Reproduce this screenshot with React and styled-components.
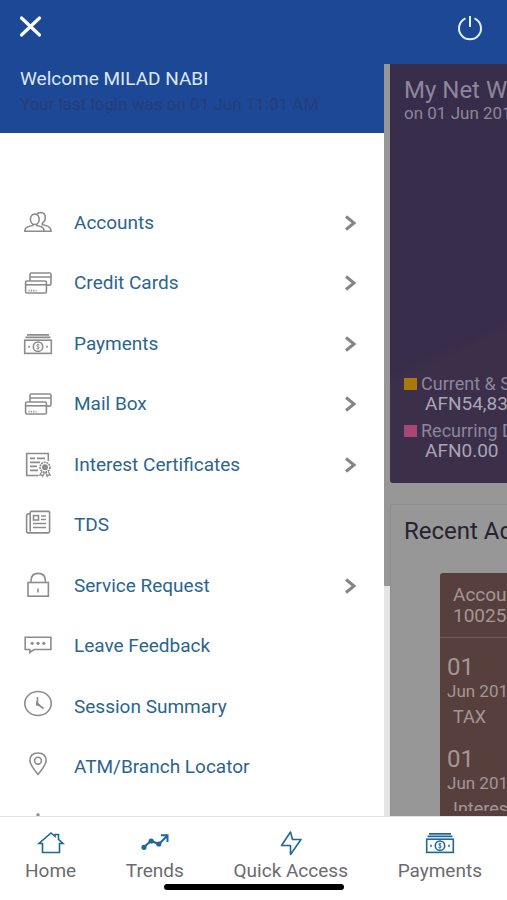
import React from 'react'
import styled, { createGlobalStyle } from 'styled-components'

const GlobalStyle = createGlobalStyle`
  * {
    box-sizing: border-box;
  }
  body {
    margin: 0;
    font-family: Roboto, 'Liberation Sans', sans-serif;
    background: #fff;
  }
  h2, p, ul {
    margin: 0;
    padding: 0;
  }
  ul {
    list-style: none;
  }
`

const Screen = styled.div`
  display: flex;
  flex-direction: column;
  height: 100vh;
  overflow: hidden;
`
const TopBar = styled.header`
  display: flex;
  flex: none;
  align-items: center;
  justify-content: space-between;
  height: 64px;
  padding: 0 22px 10px 16px;
  background: #1d4896;
`
const IconButton = styled.button`
  display: flex;
  padding: 0;
  border: none;
  background: none;
  color: ${p => p.$color};
  cursor: pointer;
`
const Main = styled.div`
  display: flex;
  flex: 1;
  min-height: 0;
`

const Drawer = styled.aside`
  display: flex;
  flex: none;
  width: 390px;
  max-width: 77%;
  overflow: hidden;
`
const DrawerBody = styled.div`
  flex: 1;
  min-width: 0;
  background: #fff;
`
const ScrollTrack = styled.div`
  flex: none;
  width: 6px;
  background: #e4e4e4;
`
const ScrollThumb = styled.div`
  height: 522px;
  background: #979797;
`
const Greeting = styled.div`
  height: 69px;
  padding: 3px 20px 0;
  background: #1d4896;
`
const Welcome = styled.h2`
  color: #dbe8fb;
  font-size: 19px;
  font-weight: 400;
  line-height: 24px;
`
const LastLogin = styled.p`
  color: #263d79;
  font-size: 17px;
  line-height: 26px;
  white-space: nowrap;
`
const Menu = styled.ul`
  padding-top: 59px;
`
const MenuItem = styled.li`
  height: 61px;
  &:nth-child(even) {
    height: 60px;
  }
`
const MenuLink = styled.a`
  display: flex;
  align-items: center;
  height: 100%;
  padding: 0 24px 0 22px;
  color: #2b658f;
  font-size: 19px;
  line-height: 24px;
  text-decoration: none;
`
const MenuLabel = styled.span`
  flex: 1;
  padding-left: 20px;
`
const GreyIcon = styled.svg`
  flex: none;
  width: 32px;
  height: 32px;
  fill: none;
  stroke: #8c8c8c;
  stroke-width: 1.6;
  overflow: visible;
`
const Chevron = styled.svg`
  flex: none;
  width: 20px;
  height: 20px;
  fill: none;
  stroke: #858585;
  stroke-width: 3;
`

const Dashboard = styled.main`
  flex: 1;
  min-width: 0;
  overflow: hidden;
  background: #979797;
  white-space: nowrap;
`
const NetWorth = styled.section`
  display: flex;
  flex-direction: column;
  justify-content: space-between;
  height: 419px;
  padding: 13px 14px 22px;
  border-radius: 0 0 0 3px;
  background: linear-gradient(155deg, #372c49 64%, #3b2f4a 68%);
  color: #8d869c;
`
const NetTitle = styled.h2`
  font-size: 24px;
  font-weight: 400;
  line-height: 26px;
`
const NetDate = styled.p`
  font-size: 17px;
  line-height: 20px;
`
const Legend = styled.ul`
  display: grid;
  gap: 6px;
`
const LegendName = styled.div`
  display: flex;
  align-items: center;
  gap: 4px;
  font-size: 18px;
  line-height: 21px;
`
const Swatch = styled.span`
  flex: none;
  width: 13px;
  height: 12px;
  background: ${p => p.$color};
`
const LegendValue = styled.div`
  padding-left: 21px;
  color: #aaa5b4;
  font-size: 19px;
  line-height: 20px;
`
const Recent = styled.section`
  margin-top: 21px;
  border: 1px solid #8e8e92;
  border-width: 1px 0 0 1px;
  border-radius: 3px 0 0 0;
`
const RecentTitle = styled.h2`
  padding: 12px 13px 0;
  color: #25242f;
  font-size: 24px;
  font-weight: 400;
  line-height: 28px;
`
const AccountCard = styled.div`
  margin: 28px 0 0 49px;
  padding-bottom: 8px;
  border-radius: 3px 0 0 0;
  background: #573f3e;
  color: #a59694;
  font-size: 19px;
`
const AccountHead = styled.div`
  height: 65px;
  padding: 11px 13px 0;
  border-bottom: 1px solid #705c5b;
  line-height: 21px;
`
const EntryList = styled.ul`
  height: 173px;
  overflow: hidden;
`
const Entry = styled.li`
  height: 92px;
  padding: 16px 7px 0;
  font-size: 18px;
`
const EntryDay = styled.div`
  font-size: 24px;
  line-height: 26px;
`
const EntryMonth = styled.div`
  font-size: 17px;
  line-height: 22px;
`
const EntryName = styled.div`
  padding-left: 6px;
  line-height: 30px;
`

const TabBar = styled.nav`
  position: relative;
  display: flex;
  flex: none;
  justify-content: space-between;
  height: 84px;
  padding: 8px 25px 0;
  border-top: 1px solid #e3e3e3;
  background: #fff;
`
const Tab = styled.a`
  display: flex;
  flex-direction: column;
  align-items: center;
  color: #6b6b70;
  font-size: 19px;
  line-height: 24px;
  text-decoration: none;
`
const TabIcon = styled.svg`
  width: 32px;
  height: 34px;
  fill: none;
  stroke: #1f6699;
  stroke-width: 1.6;
`
const HomeIndicator = styled.div`
  position: absolute;
  bottom: 10px;
  left: 50%;
  width: 180px;
  height: 6px;
  border-radius: 3px;
  background: #000;
  transform: translateX(-50%);
`

const cards = (
  <>
    <path d="M8 14V7.300q0-1.300 1.300-1.300h18.400q1.300 0 1.300 1.300v9.500q0 1.300-1.300 1.300H25M8 10h21" />
    <rect x="3.6" y="14" width="20.8" height="12" rx="1.3" />
    <path d="M4 17.8h20" />
    <path d="M6.5 23.6h8" strokeDasharray="1.2 1.2" />
  </>
)
const money = (
  <>
    <path d="M5 6.800h22M3.500 9.300h25" strokeWidth="1.800" />
    <rect x="2.7" y="12.2" width="26.6" height="13.2" />
    <circle cx="16" cy="18.7" r="4.7" />
    <path d="M17.4 17q-1.4-1-2.4-.1t.9 1.7q2 .8.9 1.8t-2.4 0M16 15.8v5.8" strokeWidth="0.9" />
    <path d="M6.2 18.8h1.6M24.2 18.8h1.6" strokeWidth="2" />
  </>
)

const menuItems = [
  {
    label: 'Accounts',
    arrow: true,
    icon: (
      <>
        <ellipse cx="12.8" cy="12.3" rx="4.4" ry="5.2" />
        <path d="M14.500 7.500q1.600-2 4.400-2 4.400.2 4.400 5.200 0 4-3.300 5.500" />
        <path d="M10.800 17v1.500q-6.600 1-7.500 3.500l-.5 2.300h19.400l-.5-2.300q-1.200-2.500-7-3.500V17" />
        <path d="M20.300 16v1.800q6.800 1 8.200 4l.5 2.500h-6.500" />
      </>
    ),
  },
  { label: 'Credit Cards', arrow: true, icon: cards },
  { label: 'Payments', arrow: true, icon: money },
  { label: 'Mail Box', arrow: true, icon: cards },
  {
    label: 'Interest Certificates',
    arrow: true,
    icon: (
      <>
        <path d="M16.500 26.500H4.700V4.500h21.600V12" />
        <path d="M8 9.400h5M15 9.400h8M8 13.400h10M8 17.400h7M8 21.400h8" />
        <circle cx="23" cy="18.300" r="5" strokeDasharray="2 .7" />
        <circle cx="23" cy="18.300" r="2.200" fill="#8c8c8c" />
        <path d="M19.800 22.500l-2 3.500 2.200-.2.800 1.500 1.700-4M26.200 22.500l2 3.500-2.200-.2-.8 1.500-1.700-4" strokeWidth="1.200" />
      </>
    ),
  },
  {
    label: 'TDS',
    icon: (
      <>
        <path d="M8.200 22.500V3.600q0-1.200 1.200-1.200h17q1.200 0 1.200 1.200v19q0 1.300-1.300 1.300H6.600q-2 0-2-2V6.500q0-1.800 3.600-2" />
        <rect x="11.500" y="6.600" width="5" height="4.400" />
        <path d="M19 7h5M19 10.500h5M11 14.500h13M11 18.500h13" />
      </>
    ),
  },
  {
    label: 'Service Request',
    arrow: true,
    icon: (
      <>
        <rect x="6" y="12.500" width="20.400" height="13.700" />
        <path d="M9 12.500V11q0-7.600 7.200-7.600t7.200 7.600v1.500M16 18.500v4" />
      </>
    ),
  },
  {
    label: 'Leave Feedback',
    icon: (
      <>
        <path d="M3.200 7.300h25.700v12.200H12L7.800 22.400v-2.900H3.200z" />
        <g fill="#8c8c8c" stroke="none">
          <circle cx="10.200" cy="13.300" r="1.600" />
          <circle cx="16" cy="13.300" r="1.600" />
          <circle cx="21.800" cy="13.300" r="1.600" />
        </g>
      </>
    ),
  },
  {
    label: 'Session Summary',
    icon: (
      <>
        <ellipse cx="16" cy="12.500" rx="13.200" ry="12" />
        <path d="M15.500 6v7l6 4.500" />
        <path d="M14.500 10.500l3.500 3.800h-3.500z" fill="#8c8c8c" strokeWidth="1" />
      </>
    ),
  },
  {
    label: 'ATM/Branch Locator',
    icon: (
      <>
        <path d="M16 23.400Q7.900 13.800 7.900 9.600 8 2 16 2t8.100 7.600q0 4.200-8.100 13.800z" />
        <circle cx="16" cy="9.700" r="3.400" />
      </>
    ),
  },
  {
    label: '',
    icon: <path d="M14.500 3.500L16 2l1.500 1.500M16 4q-8 2-8 11v6h16v-6q0-9-8-11" />,
  },
]

const tabs = [
  {
    label: 'Home',
    icon: <path d="M7.500 27.500V18.500H4L16 8l4 3.300V9.500h3.500v4.800l4.500 4.200h-3.500v9z" />,
  },
  {
    label: 'Trends',
    icon: (
      <>
        <path d="M5 22l7-6 8 3 8-8M22 10.300h6.500V17" strokeWidth="2" />
        <g fill="#1f6699">
          <circle cx="5" cy="22.300" r="1.800" />
          <circle cx="12.200" cy="16" r="1.800" />
          <circle cx="19.800" cy="19" r="1.800" />
        </g>
      </>
    ),
  },
  {
    label: 'Quick Access',
    icon: <path d="M15.500 7L6.500 20.500h9V29.500L26 14.500h-8.500L15.500 7z" strokeLinejoin="round" />,
  },
  { label: 'Payments', icon: <g transform="translate(0 2)">{money}</g> },
]

const legend = [
  { name: 'Current & Savings', value: 'AFN54,832.00', color: '#a8790f' },
  { name: 'Recurring Deposit', value: 'AFN0.00', color: '#a84676' },
]

const entries = [
  { day: '01', month: 'Jun 2019', name: 'TAX' },
  { day: '01', month: 'Jun 2019', name: 'Interest' },
]

function App() {
  return (
    <Screen>
      <GlobalStyle />
      <TopBar>
        <IconButton type="button" aria-label="Close menu" $color="#fff">
          <svg width="30" height="30" viewBox="0 0 30 30" fill="none" stroke="currentColor" strokeWidth="3.200" strokeLinecap="round">
            <path d="M5.500 6l18 17M23.500 6l-18 17" />
          </svg>
        </IconButton>
        <IconButton type="button" aria-label="Log out" $color="#dff0ff">
          <svg width="30" height="30" viewBox="0 0 30 30" fill="none" stroke="currentColor" strokeWidth="2">
            <path d="M10.500 6.300a11 11 0 1 0 9 0M15 4v11" />
          </svg>
        </IconButton>
      </TopBar>

      <Main>
        <Drawer>
          <DrawerBody>
            <Greeting>
              <Welcome>Welcome MILAD NABI</Welcome>
              <LastLogin>Your last login was on 01 Jun 11:01 AM</LastLogin>
            </Greeting>
            <Menu>
              {menuItems.map((item, i) => (
                <MenuItem key={i}>
                  <MenuLink href="#">
                    <GreyIcon viewBox="0 0 32 32">{item.icon}</GreyIcon>
                    <MenuLabel>{item.label}</MenuLabel>
                    {item.arrow && (
                      <Chevron viewBox="0 0 20 20">
                        <path d="M6 3.500l8 6.500-8 6.500" />
                      </Chevron>
                    )}
                  </MenuLink>
                </MenuItem>
              ))}
            </Menu>
          </DrawerBody>
          <ScrollTrack>
            <ScrollThumb />
          </ScrollTrack>
        </Drawer>

        <Dashboard>
          <NetWorth>
            <div>
              <NetTitle>My Net Worth</NetTitle>
              <NetDate>on 01 Jun 2019</NetDate>
            </div>
            <Legend>
              {legend.map(item => (
                <li key={item.name}>
                  <LegendName>
                    <Swatch $color={item.color} />
                    {item.name}
                  </LegendName>
                  <LegendValue>{item.value}</LegendValue>
                </li>
              ))}
            </Legend>
          </NetWorth>
          <Recent>
            <RecentTitle>Recent Activity</RecentTitle>
            <AccountCard>
              <AccountHead>
                <div>Account</div>
                <div>100254</div>
              </AccountHead>
              <EntryList>
                {entries.map(entry => (
                  <Entry key={entry.name}>
                    <EntryDay>{entry.day}</EntryDay>
                    <EntryMonth>{entry.month}</EntryMonth>
                    <EntryName>{entry.name}</EntryName>
                  </Entry>
                ))}
              </EntryList>
            </AccountCard>
          </Recent>
        </Dashboard>
      </Main>

      <TabBar>
        {tabs.map(tab => (
          <Tab key={tab.label} href="#">
            <TabIcon viewBox="0 0 32 34">{tab.icon}</TabIcon>
            {tab.label}
          </Tab>
        ))}
        <HomeIndicator />
      </TabBar>
    </Screen>
  )
}

export default App
